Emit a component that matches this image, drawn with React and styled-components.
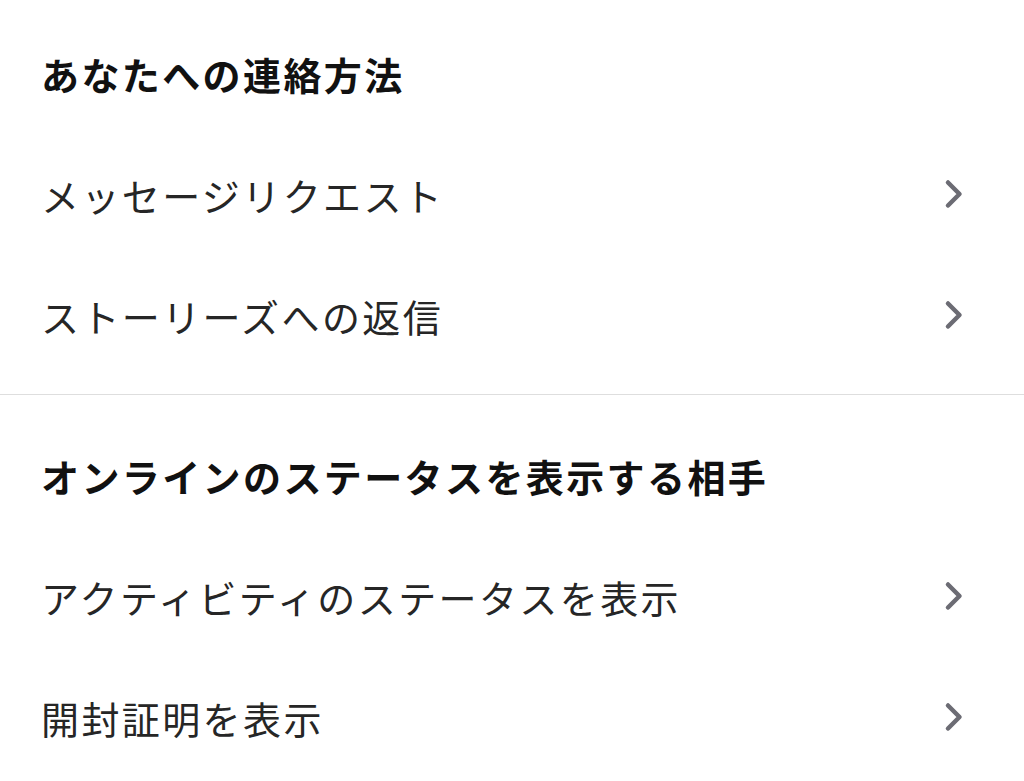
import React from "react";
import styled, { createGlobalStyle } from "styled-components";

const Global = createGlobalStyle`
  html, body { margin: 0; padding: 0; background: #ffffff; }
  body { font-family: "Noto Sans CJK JP", "Noto Sans", sans-serif; }
`;

const Page = styled.div`
  width: 1024px;
  height: 781px;
  overflow: hidden;
  background: #fff;
  padding-top: 16px;
  box-sizing: border-box;
`;

const Section = styled.section`
  display: flex;
  flex-direction: column;
`;

const Heading = styled.h2`
  margin: 0;
  height: 121px;
  box-sizing: border-box;
  display: flex;
  align-items: center;
  padding: 0 0 7px 41px;
  font-size: 38px;
  letter-spacing: 2.4px;
  font-weight: 700;
  color: #111111;
`;

const Row = styled.div`
  height: 121px;
  box-sizing: border-box;
  display: flex;
  align-items: center;
  justify-content: space-between;
  padding: 0 60px 7px 41px;
`;

const Label = styled.span`
  font-size: 38px;
  letter-spacing: 2.4px;
  font-weight: 400;
  color: #262626;
`;

const Divider = styled.hr`
  margin: 15px 0 23px;
  border: none;
  height: 1px;
  background: #dedede;
`;

const Chevron = () => (
  <svg width="20" height="30" viewBox="0 0 20 30" aria-hidden="true">
    <path d="M4 3.5 L15.5 15 L4 26.5" fill="none" stroke="#6c6c74" strokeWidth="4.5" strokeLinecap="round" strokeLinejoin="round" />
  </svg>
);

const sections = [
  { title: "あなたへの連絡方法", items: ["メッセージリクエスト", "ストーリーズへの返信"] },
  { title: "オンラインのステータスを表示する相手", items: ["アクティビティのステータスを表示", "開封証明を表示"] },
];

export default function App() {
  return (
    <>
      <Global />
      <Page>
        {sections.map((s, i) => (
          <React.Fragment key={s.title}>
            {i > 0 && <Divider />}
            <Section>
              <Heading>{s.title}</Heading>
              {s.items.map((it) => (
                <Row key={it}>
                  <Label>{it}</Label>
                  <Chevron />
                </Row>
              ))}
            </Section>
          </React.Fragment>
        ))}
      </Page>
    </>
  );
}
